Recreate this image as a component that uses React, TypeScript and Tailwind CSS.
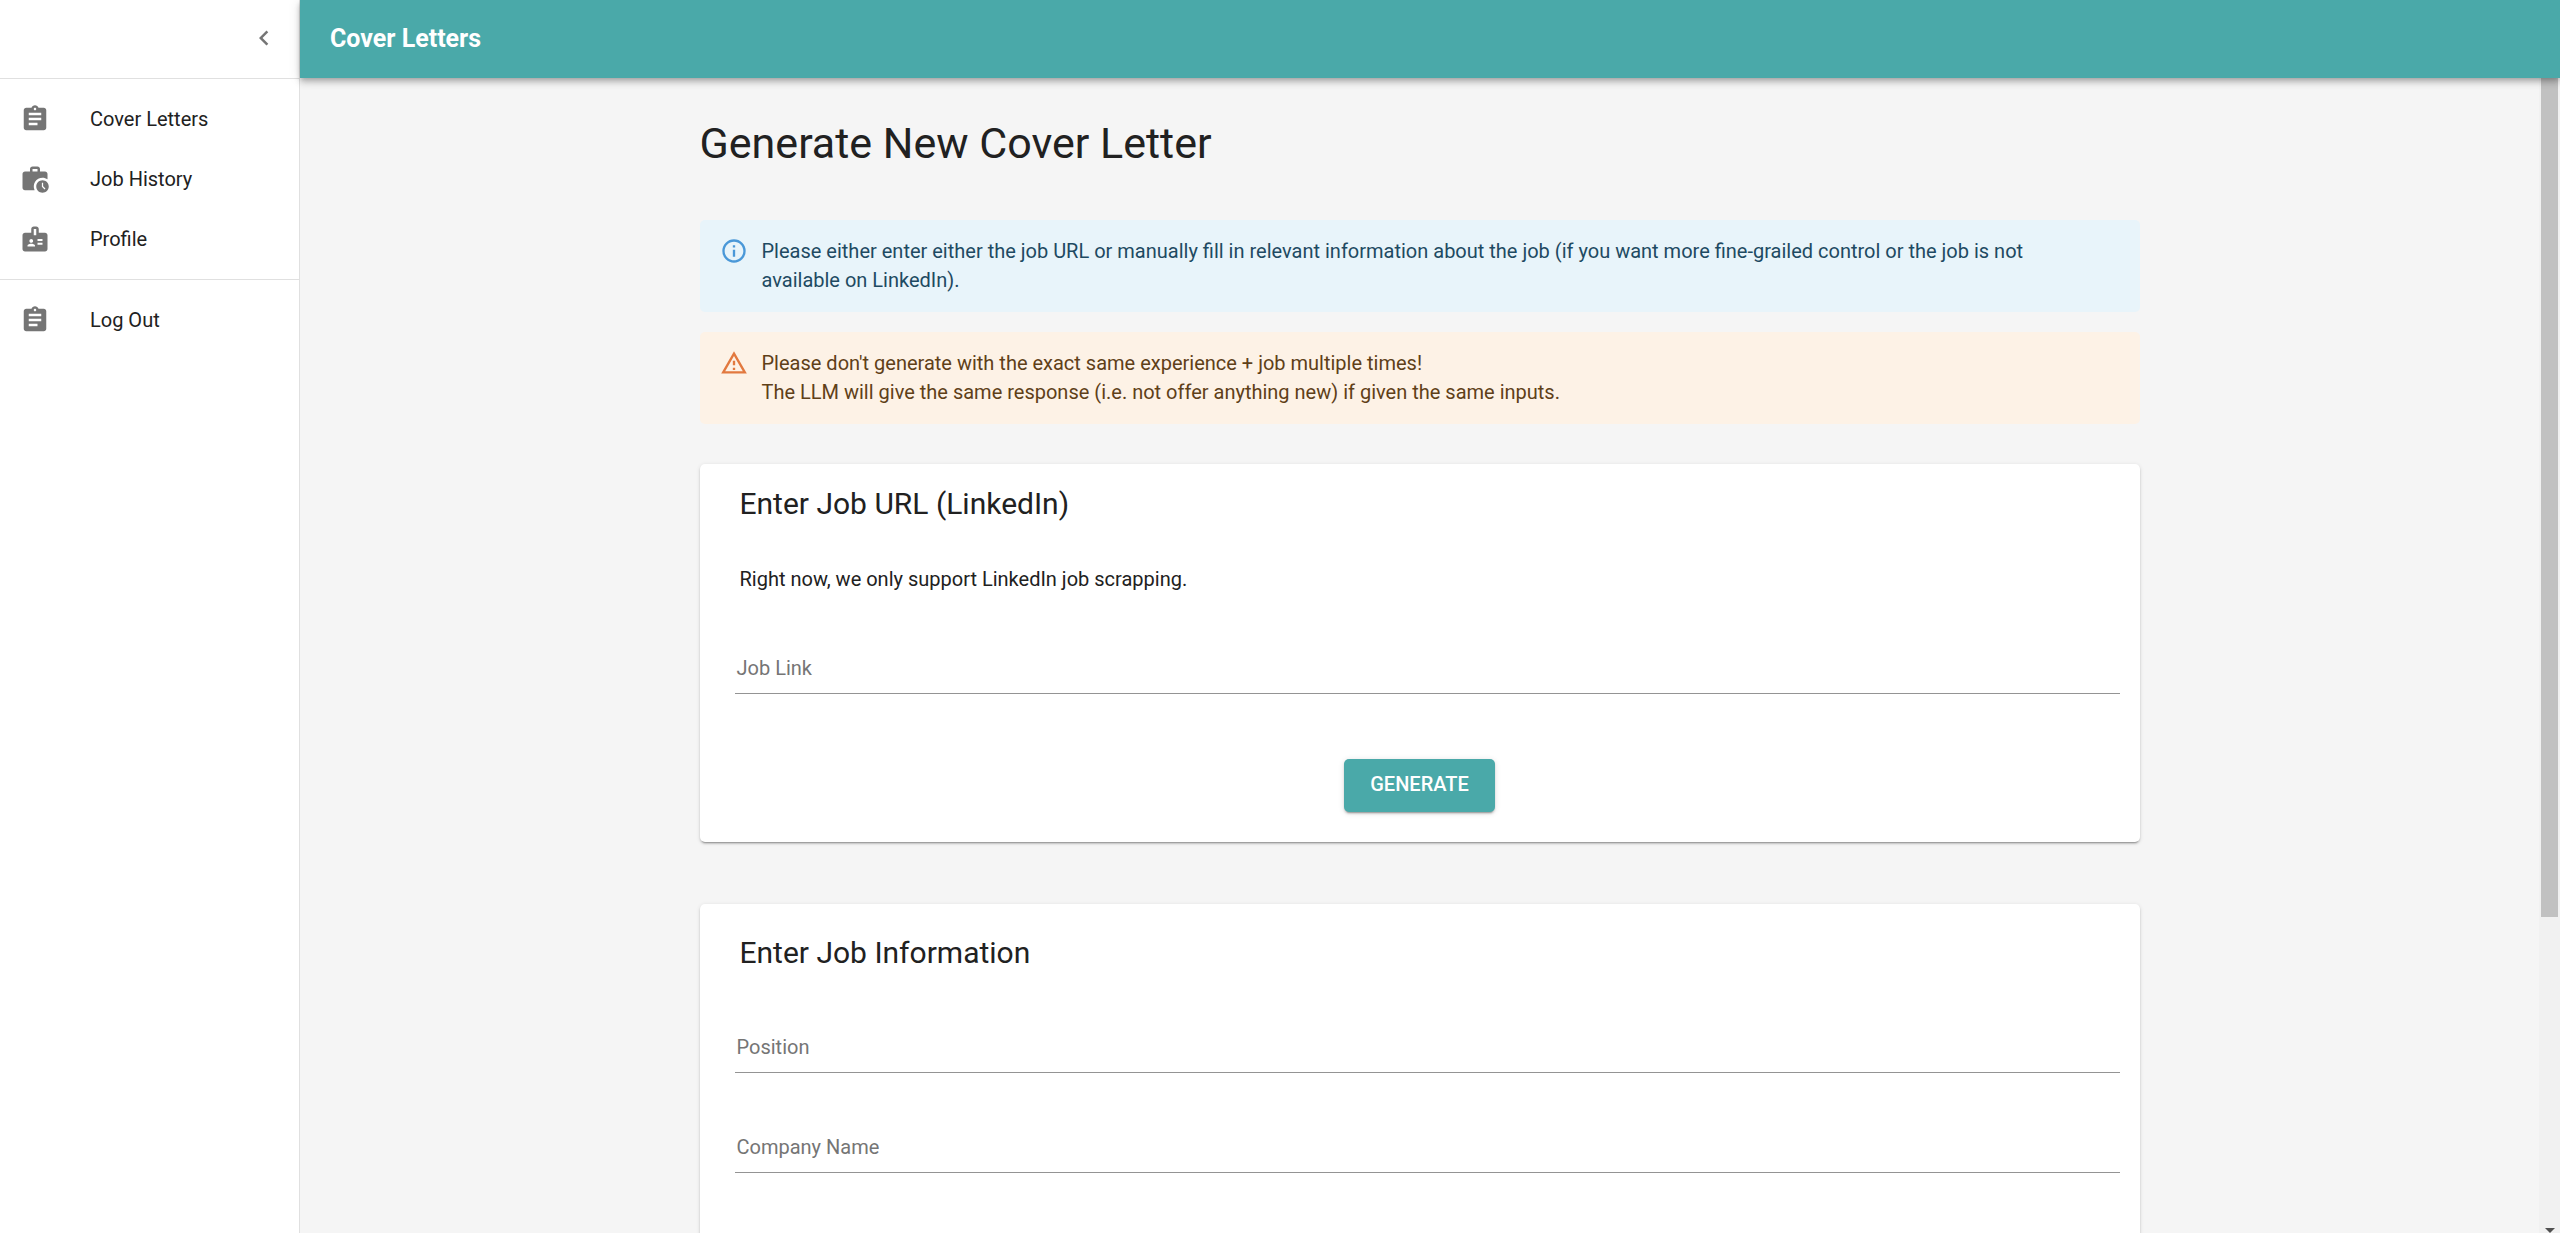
import type { ComponentType, ReactNode } from "react";
import { MdAssignment, MdBadge, MdChevronLeft, MdWorkHistory } from "react-icons/md";

type IconType = ComponentType<{ className?: string }>;

function NavItem({ icon: Icon, label }: { icon: IconType; label: string }) {
  return (
    <li>
      <a href="#" className="flex h-15 items-center pl-5 text-xl leading-[30px]">
        <span className="w-[70px] shrink-0">
          <Icon className="size-[30px] text-[#757575]" />
        </span>
        {label}
      </a>
    </li>
  );
}

function Sidebar() {
  return (
    <aside className="flex w-[300px] shrink-0 flex-col border-r border-[#e0e0e0] bg-white">
      <div className="flex h-[79px] shrink-0 items-start justify-end border-b border-[#e0e0e0] pt-[23px] pr-5">
        <button type="button" aria-label="Collapse menu">
          <MdChevronLeft className="size-[30px] text-[#757575]" />
        </button>
      </div>
      <nav>
        <ul className="border-b border-[#e0e0e0] py-2.5">
          <NavItem icon={MdAssignment} label="Cover Letters" />
          <NavItem icon={MdWorkHistory} label="Job History" />
          <NavItem icon={MdBadge} label="Profile" />
        </ul>
        <ul className="py-2.5">
          <NavItem icon={MdAssignment} label="Log Out" />
        </ul>
      </nav>
    </aside>
  );
}

function InfoIcon() {
  return (
    <svg viewBox="0 0 24 24" fill="currentColor" className="size-7 shrink-0 text-[#4a98d8]" aria-hidden="true">
      <path d="M11,9H13V7H11M12,20C7.59,20 4,16.41 4,12C4,7.59 7.59,4 12,4C16.41,4 20,7.59 20,12C20,16.41 16.41,20 12,20M12,2A10,10 0 0,0 2,12A10,10 0 0,0 12,22A10,10 0 0,0 22,12A10,10 0 0,0 12,2M11,17H13V11H11V17Z" />
    </svg>
  );
}

function WarningIcon() {
  return (
    <svg viewBox="0 0 24 24" fill="currentColor" className="size-7 shrink-0 text-[#e2793f]" aria-hidden="true">
      <path d="M12 5.99L19.53 19H4.47L12 5.99M12 2L1 21h22L12 2zm1 14h-2v2h2v-2zm0-6h-2v4h2v-4z" />
    </svg>
  );
}

function Alert({ icon, className, children }: { icon: ReactNode; className: string; children: ReactNode }) {
  return (
    <div role="alert" className={`flex gap-3.5 rounded-[5px] py-[17px] pr-[60px] pl-5 text-xl leading-[29px] ${className}`}>
      {icon}
      <div>{children}</div>
    </div>
  );
}

function Field({ id, label }: { id: string; label: string }) {
  return (
    <div className="mr-5 ml-[35px] grid">
      <input
        id={id}
        type="text"
        placeholder=" "
        className="peer col-start-1 row-start-1 h-[51px] w-full border-b border-[#949494] bg-transparent px-0.5 text-xl leading-[30px] outline-none"
      />
      <label
        htmlFor={id}
        className="pointer-events-none col-start-1 row-start-1 self-center px-0.5 pb-0.5 text-xl leading-[30px] text-[#757575] peer-[:not(:placeholder-shown)]:opacity-0"
      >
        {label}
      </label>
    </div>
  );
}

const CARD =
  "rounded-[5px] bg-white shadow-[0_3px_1px_-2px_rgba(0,0,0,0.2),0_2px_2px_0_rgba(0,0,0,0.14),0_1px_4px_0_rgba(0,0,0,0.12)]";

function Scrollbar() {
  return (
    <div className="flex w-[21px] shrink-0 flex-col items-center justify-between overflow-hidden bg-[#f1f1f1]" aria-hidden="true">
      <div className="h-[839px] w-[17px] bg-[#c1c1c1]" />
      <svg viewBox="0 0 10 5" className="h-[5px] w-2.5" fill="#505050">
        <path d="M0 0h10L5 5z" />
      </svg>
    </div>
  );
}

export default function App() {
  return (
    <div className="flex h-screen overflow-hidden bg-[#f5f5f5] font-[Roboto,sans-serif] text-[#212121]">
      <Sidebar />
      <div className="flex min-w-0 flex-1 flex-col">
        <header className="relative z-10 flex h-[78px] shrink-0 items-center bg-[#4aa9a9] px-[30px] text-white shadow-[0_2px_5px_-1px_rgba(0,0,0,0.2),0_5px_6px_0_rgba(0,0,0,0.14),0_1px_12px_0_rgba(0,0,0,0.12)]">
          <p className="text-[25px] leading-10 font-bold">Cover Letters</p>
        </header>
        <div className="flex min-h-0 flex-1">
          <main className="min-w-0 flex-1 overflow-y-auto [scrollbar-width:none]">
            <div className="mx-auto max-w-[1500px] px-[30px] pt-10">
              <h1 className="text-[43px] leading-[50px]">Generate New Cover Letter</h1>
              <div className="mt-[52px] flex flex-col gap-5">
                <Alert icon={<InfoIcon />} className="bg-[#e8f4fa] text-[#1e4a62]">
                  Please either enter either the job URL or manually fill in relevant information about the job (if you want
                  more fine-grailed control or the job is not available on LinkedIn).
                </Alert>
                <Alert icon={<WarningIcon />} className="bg-[#fdf2e6] text-[#5f4018]">
                  Please don't generate with the exact same experience + job multiple times!
                  <br />
                  The LLM will give the same response (i.e. not offer anything new) if given the same inputs.
                </Alert>
              </div>

              <form className={`mt-10 pt-5 pb-[30px] ${CARD}`}>
                <h2 className="px-10 text-3xl leading-10">Enter Job URL (LinkedIn)</h2>
                <p className="mt-10 px-10 text-xl leading-[30px]">Right now, we only support LinkedIn job scrapping.</p>
                <div className="mt-[49px]">
                  <Field id="job-link" label="Job Link" />
                </div>
                <div className="mt-[65px] flex justify-center">
                  <button
                    type="button"
                    className="h-[53px] rounded-[5px] bg-[#4aa9a9] px-[26px] pb-0.5 text-xl leading-[33px] font-medium text-white uppercase shadow-[0_3px_1px_-2px_rgba(0,0,0,0.2),0_2px_2px_0_rgba(0,0,0,0.14),0_1px_6px_0_rgba(0,0,0,0.12)]"
                  >
                    Generate
                  </button>
                </div>
              </form>

              <form className={`mt-[62px] pt-[29px] pb-20 ${CARD}`}>
                <h2 className="px-10 text-3xl leading-10">Enter Job Information</h2>
                <div className="mt-[49px] flex flex-col gap-[49px]">
                  <Field id="position" label="Position" />
                  <Field id="company" label="Company Name" />
                </div>
              </form>
            </div>
          </main>
          <Scrollbar />
        </div>
      </div>
    </div>
  );
}
